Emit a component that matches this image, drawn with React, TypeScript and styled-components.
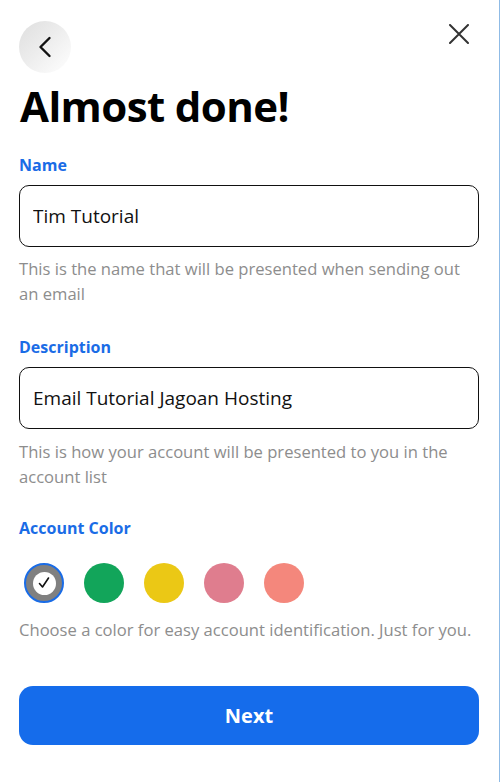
import React from "react";
import styled, { createGlobalStyle } from "styled-components";

const Global = createGlobalStyle`
  html, body { margin: 0; padding: 0; background: #fff; }
  body { font-family: "Open Sans", "Noto Sans", sans-serif; }
  * { box-sizing: border-box; }
`;

const Page = styled.div`
  width: 500px;
  min-height: 782px;
  border-right: 1px solid #8fbbe6;
  padding: 21px 20px 0 19px;
  display: flex;
  flex-direction: column;
`;

const TopBar = styled.div`
  display: flex;
  justify-content: space-between;
  align-items: flex-start;
`;

const BackButton = styled.button`
  width: 52px;
  height: 52px;
  border-radius: 50%;
  border: none;
  padding: 0;
  background: linear-gradient(135deg, #dedede 0%, #eeeeee 50%, #ffffff 100%);
  display: flex;
  align-items: center;
  justify-content: center;
`;

const CloseButton = styled.button`
  border: none;
  background: none;
  padding: 0;
  margin-top: 3px;
  margin-right: 10px;
  width: 20px;
  height: 20px;
  display: flex;
`;

const Title = styled.h1`
  margin: 5px 0 0 1px;
  font-size: 42px;
  line-height: 56px;
  font-weight: 700;
  color: #000;
  letter-spacing: -0.6px;
`;

const Field = styled.div<{ $top: number }>`
  display: flex;
  flex-direction: column;
  margin-top: ${(p) => p.$top}px;
`;

const Label = styled.div`
  color: #1a6ce6;
  font-size: 16px;
  font-weight: 700;
  line-height: 22px;
`;

const Input = styled.input`
  margin-top: 9px;
  width: 460px;
  height: 62px;
  border: 1px solid #111;
  border-radius: 10px;
  padding: 0 13px;
  font-family: inherit;
  font-size: 19px;
  color: #111;
  outline: none;
`;

const Help = styled.div<{ $top?: number }>`
  margin-top: ${(p) => p.$top ?? 9}px;
  color: #8d8d8d;
  font-size: 16.6px;
  line-height: 25px;
`;

const Swatches = styled.div`
  display: flex;
  gap: 20px;
  margin-top: 24px;
  padding-left: 5px;
`;

const Swatch = styled.div<{ $color: string; $selected?: boolean }>`
  width: 40px;
  height: 40px;
  border-radius: 50%;
  background: ${(p) => p.$color};
  border: ${(p) => (p.$selected ? "2px solid #1a6ce6" : "none")};
  display: flex;
  align-items: center;
  justify-content: center;
`;

const CheckDot = styled.div`
  width: 23px;
  height: 23px;
  border-radius: 50%;
  background: #fff;
  display: flex;
  align-items: center;
  justify-content: center;
`;

const NextButton = styled.button`
  margin-top: 44px;
  width: 460px;
  height: 59px;
  border: none;
  border-radius: 14px;
  background: #156ceb;
  color: #fff;
  font-family: inherit;
  font-size: 20px;
  font-weight: 700;
`;

const colors = ["#808080", "#12a55a", "#ebc815", "#df7d8e", "#f4877c"];

export default function App() {
  return (
    <>
      <Global />
      <Page>
        <TopBar>
          <BackButton aria-label="Back">
            <svg width="14" height="22" viewBox="0 0 14 22" fill="none">
              <path d="M11.5 2 L2.5 11 L11.5 20" stroke="#111" strokeWidth="2.4" strokeLinecap="round" strokeLinejoin="round" />
            </svg>
          </BackButton>
          <CloseButton aria-label="Close">
            <svg width="20" height="20" viewBox="0 0 20 20" fill="none">
              <path d="M1 1 L19 19 M19 1 L1 19" stroke="#333" strokeWidth="2" strokeLinecap="round" />
            </svg>
          </CloseButton>
        </TopBar>
        <Title>Almost done!</Title>
        <Field $top={20}>
          <Label>Name</Label>
          <Input defaultValue="Tim Tutorial" />
          <Help>This is the name that will be presented when sending out an email</Help>
        </Field>
        <Field $top={30}>
          <Label>Description</Label>
          <Input defaultValue="Email Tutorial Jagoan Hosting" />
          <Help $top={10}>This is how your account will be presented to you in the account list</Help>
        </Field>
        <Field $top={28}>
          <Label>Account Color</Label>
          <Swatches>
            {colors.map((c, i) => (
              <Swatch key={c} $color={c} $selected={i === 0}>
                {i === 0 && (
                  <CheckDot>
                    <svg width="14" height="14" viewBox="0 0 14 14" fill="none">
                      <path d="M2.5 7.5 L5.5 11 L11.5 2" stroke="#111" strokeWidth="1.6" strokeLinecap="round" strokeLinejoin="round" />
                    </svg>
                  </CheckDot>
                )}
              </Swatch>
            ))}
          </Swatches>
          <Help $top={14}>Choose a color for easy account identification. Just for you.</Help>
        </Field>
        <NextButton>Next</NextButton>
      </Page>
    </>
  );
}
